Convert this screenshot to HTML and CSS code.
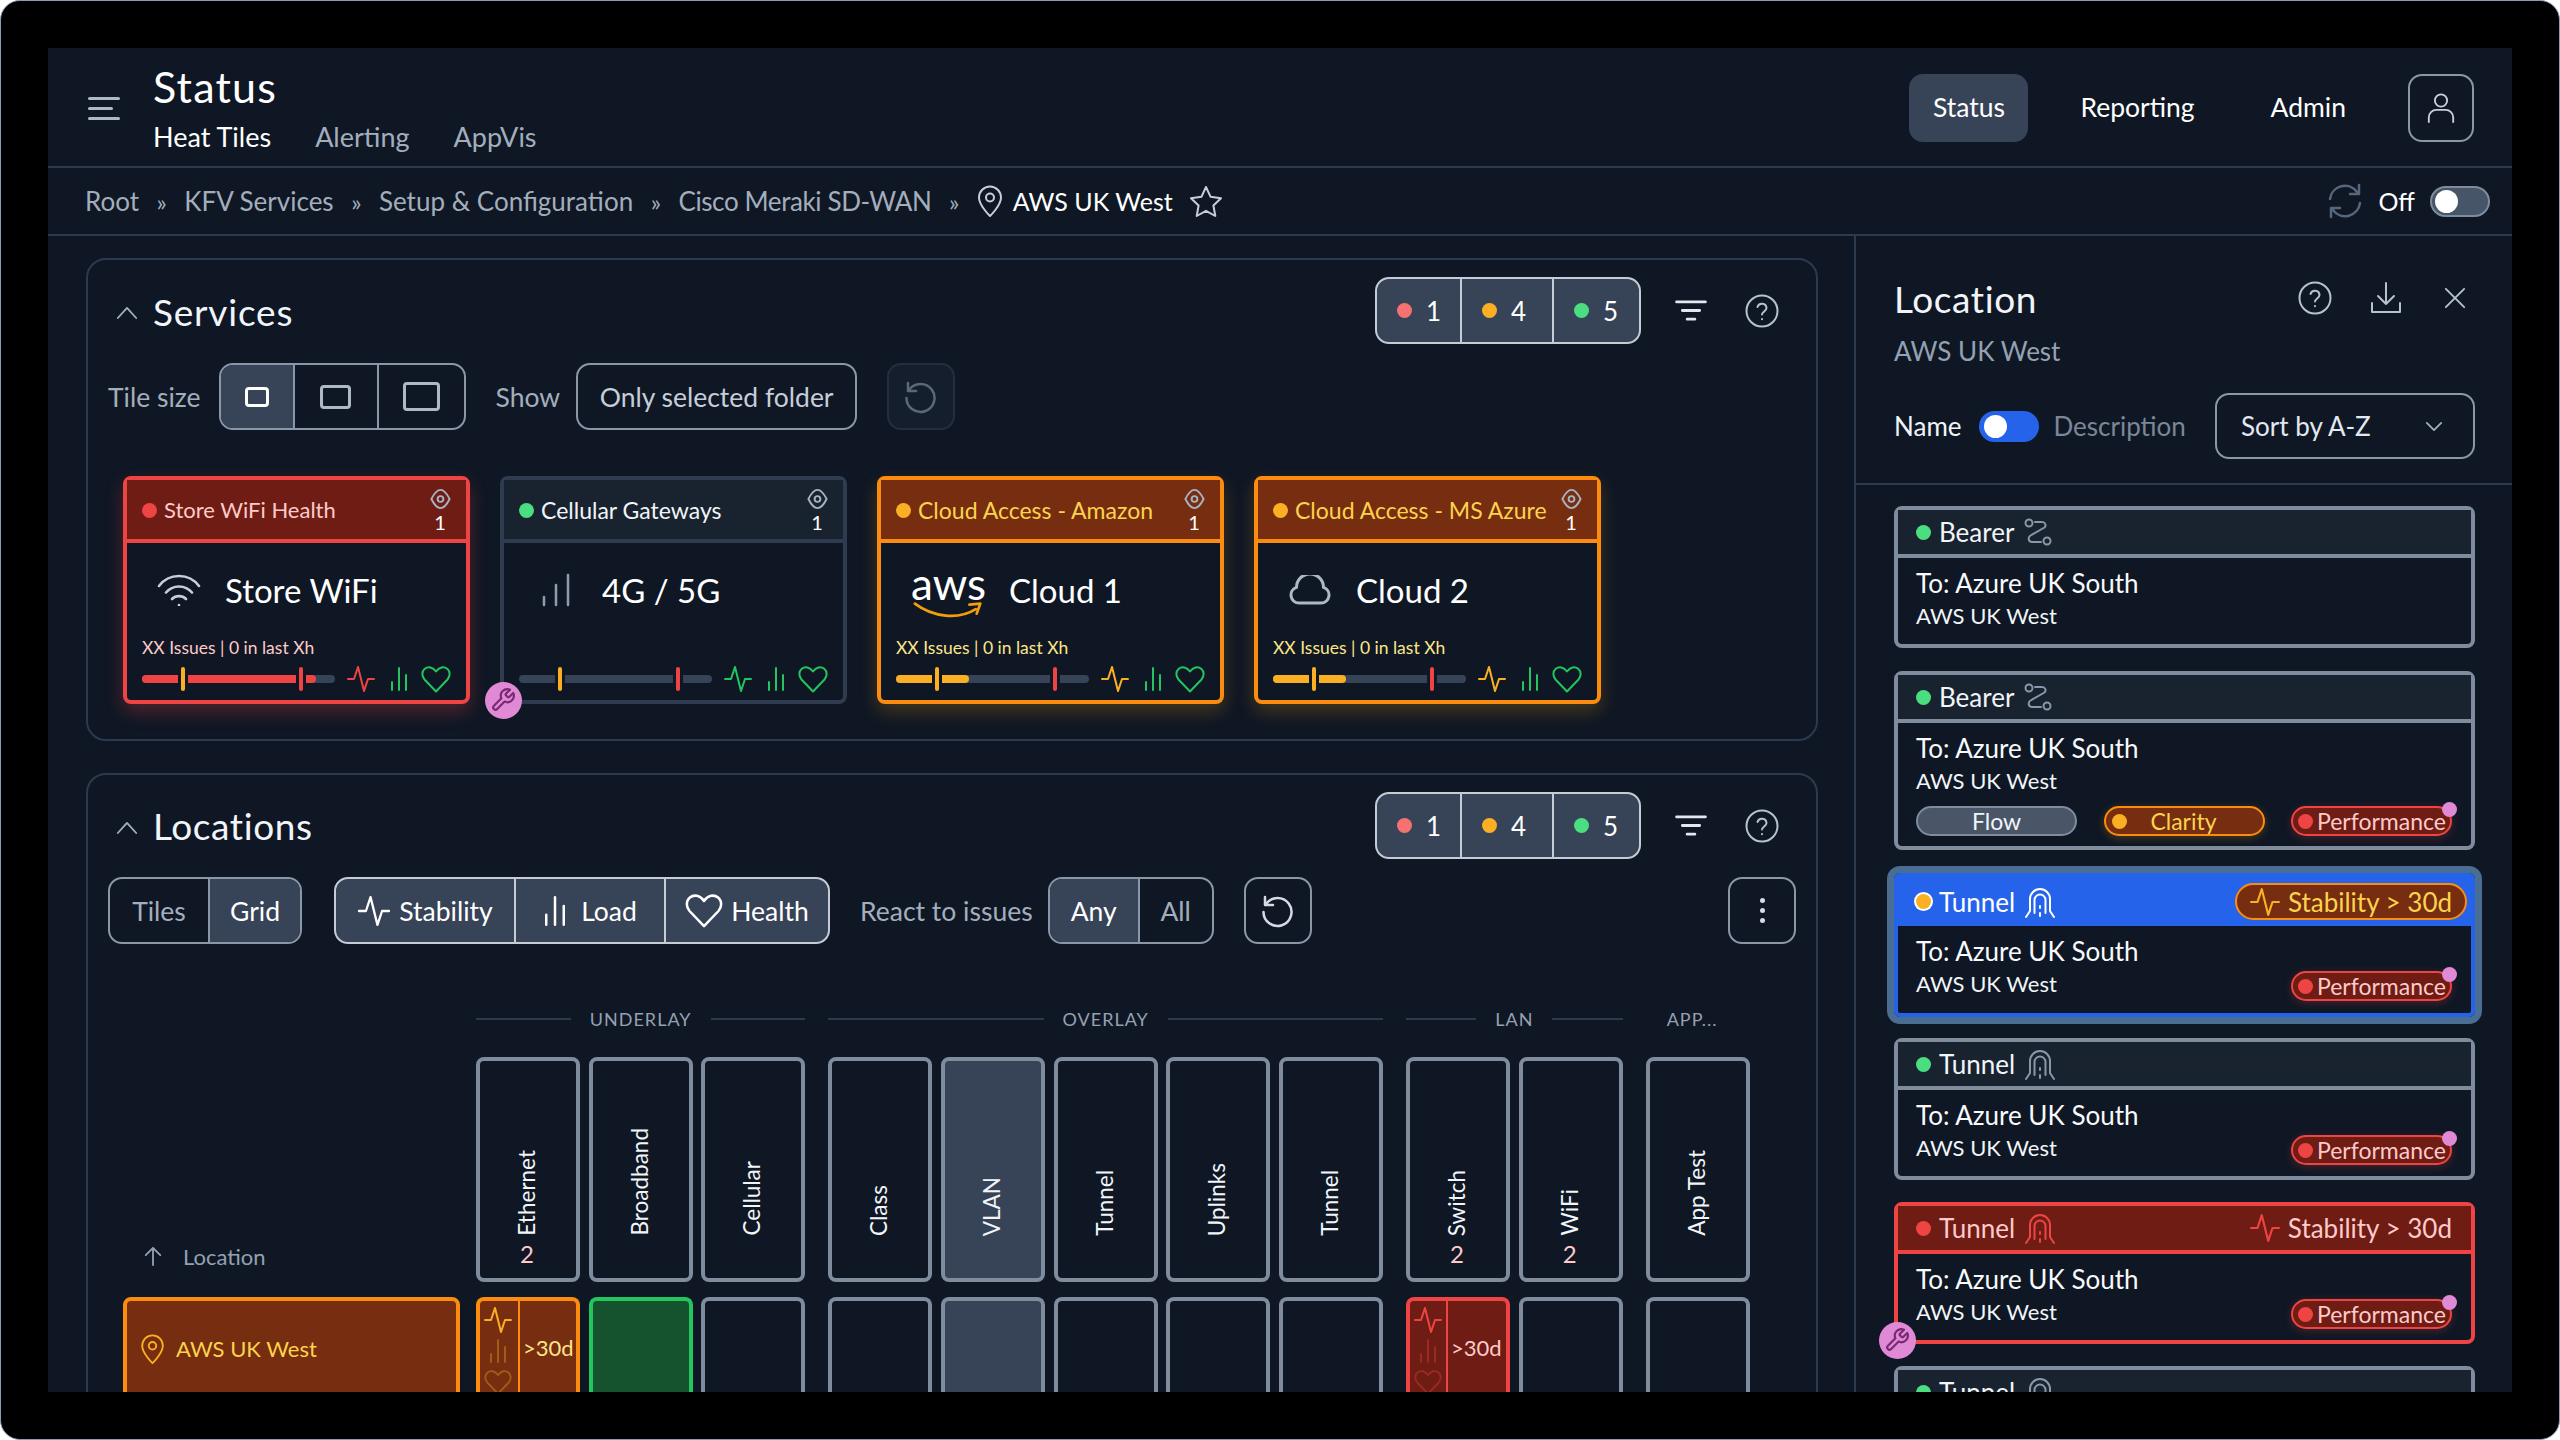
FILE: index.html
```html
<!DOCTYPE html>
<html lang="en">
<head>
<meta charset="utf-8">
<title>Status</title>
<link rel="stylesheet" href="styles.css">
</head>
<body>
<svg class="defs" aria-hidden="true">
  <symbol id="i-pulse" viewBox="0 0 28 26"><path d="M1 13h6l4-12 6 24 4-12h6"/></symbol>
  <symbol id="i-bars" viewBox="0 0 18 24"><path d="M2 15v8M9 1v22M16 8v15"/></symbol>
  <symbol id="i-heart" viewBox="0 0 30 27"><path d="M15 25.500L3.500 13.500C.5 10 .8 5.300 3.800 2.800 7 .2 11.800.9 15 5.500 18.200.9 23 .2 26.200 2.800 29.200 5.300 29.500 10 26.500 13.500z"/></symbol>
  <symbol id="i-eye" viewBox="0 0 24 24"><path d="M2.500 12C5 7 8.500 2.500 12 2.500S19 7 21.500 12C19 17 15.500 21.500 12 21.500S5 17 2.500 12z"/><circle cx="12" cy="12" r="3"/></symbol>
  <symbol id="i-help" viewBox="0 0 34 34"><circle cx="17" cy="17" r="15.500"/><path d="M12.500 13a4.600 4.600 0 0 1 9 1c0 3-4.500 3.800-4.500 6.500M17 25v.3"/></symbol>
  <symbol id="i-filter" viewBox="0 0 32 24"><path d="M1 3h30M7 12h18M12 21h8"/></symbol>
  <symbol id="i-up" viewBox="0 0 24 14"><path d="M2 13L12 2l10 11"/></symbol>
  <symbol id="i-down" viewBox="0 0 20 12"><path d="M2 2l8 8 8-8"/></symbol>
  <symbol id="i-star" viewBox="0 0 34 32"><path d="M17 2l4.600 9.800 10.400 1.400-7.600 7.300 1.900 10.500L17 25.800 7.700 31l1.900-10.500L2 13.200l10.400-1.400z"/></symbol>
  <symbol id="i-pin" viewBox="0 0 26 32"><path d="M13 31S2 20.500 2 12.500a11 11 0 0 1 22 0C24 20.500 13 31 13 31z"/><circle cx="13" cy="12.500" r="4"/></symbol>
  <symbol id="i-user" viewBox="0 0 32 34"><circle cx="16" cy="9" r="6.500"/><path d="M3 32v-5a8 8 0 0 1 8-8h10a8 8 0 0 1 8 8v5"/></symbol>
  <symbol id="i-refresh" viewBox="0 0 38 38"><path d="M4 17A15 15 0 0 1 31 10M33 3v9h-9M34 21A15 15 0 0 1 7 28M5 35v-9h9"/></symbol>
  <symbol id="i-reset" viewBox="0 0 34 34"><path d="M5 10a14 14 0 1 1-2.500 8M4 3v8h8"/></symbol>
  <symbol id="i-download" viewBox="0 0 32 32"><path d="M16 1v21M8 14l8 8 8-8M2 21v9h28v-9"/></symbol>
  <symbol id="i-close" viewBox="0 0 24 24"><path d="M2 2l20 20M22 2L2 22"/></symbol>
  <symbol id="i-wifi" viewBox="0 0 44 32"><path d="M2 12a25 25 0 0 1 40 0M9 18.500a17 17 0 0 1 26 0M15 25a10 10 0 0 1 14 0M22 31v.3"/></symbol>
  <symbol id="i-signal" viewBox="0 0 28 34"><path d="M2 24v8M14 12v20M26 2v30"/></symbol>
  <symbol id="i-cloud" viewBox="0 0 42 30"><path d="M10 28h22a8 8 0 0 0 2.500-15.600A13.500 13.500 0 0 0 7.500 12.400 8 8 0 0 0 10 28z"/></symbol>
  <symbol id="i-wrench" viewBox="0 0 24 24"><path d="M14.700 6.300a1 1 0 0 0 0 1.400l1.600 1.600a1 1 0 0 0 1.400 0l3.770-3.770a6 6 0 0 1-7.940 7.940l-6.910 6.910a2.120 2.120 0 0 1-3-3l6.910-6.910a6 6 0 0 1 7.940-7.940l-3.760 3.760z"/></symbol>
  <symbol id="i-route" viewBox="0 0 28 28"><circle cx="5" cy="5" r="3.500"/><circle cx="23" cy="23" r="3.500"/><path d="M11 4h7c3.500 0 4.500 3.500 2.500 5.500L6.500 17.500C3.500 19.500 4.500 24 8 24h9"/></symbol>
  <symbol id="i-tunnel" viewBox="0 0 30 32"><path d="M1 31l4-6V13a10 10 0 0 1 20 0v12l4 6M9.500 27V14a5.500 5.500 0 0 1 11 0v13M15 20v2M15 27v3"/></symbol>
  <symbol id="i-arrow" viewBox="0 0 20 22"><path d="M10 21V2M2 10l8-8 8 8"/></symbol>
  <symbol id="i-smile" viewBox="0 0 76 22"><path class="smile" d="M1 4c20 15 48 18 67 6"/><path class="smile" d="M61 5l12-1-4 11"/></symbol>
</svg>

<div class="screen">
  <div class="app">
    <header class="topbar">
      <div class="burger"><span></span><span class="short"></span><span></span></div>
      <div class="titles">
        <h1 class="title">Status</h1>
        <nav class="tabs"><span class="tab on">Heat Tiles</span><span class="tab">Alerting</span><span class="tab">AppVis</span></nav>
      </div>
      <nav class="mainnav">
        <span class="nav-item active">Status</span>
        <span class="nav-item">Reporting</span>
        <span class="nav-item">Admin</span>
        <span class="user-btn"><svg class="ic w32"><use href="#i-user"/></svg></span>
      </nav>
    </header>

    <div class="crumbs">
      <span class="crumb">Root</span><span class="sep">»</span>
      <span class="crumb">KFV Services</span><span class="sep">»</span>
      <span class="crumb">Setup &amp; Configuration</span><span class="sep">»</span>
      <span class="crumb tight">Cisco Meraki SD-WAN</span><span class="sep">»</span>
      <svg class="ic pin-crumb"><use href="#i-pin"/></svg>
      <span class="crumb current">AWS UK West</span>
      <svg class="ic star"><use href="#i-star"/></svg>
      <div class="auto">
        <svg class="ic refresh"><use href="#i-refresh"/></svg>
        <span class="off-label">Off</span>
        <span class="toggle"><span class="knob"></span></span>
      </div>
    </div>

    <div class="workspace">
      <main class="content">
        <section class="card services">
          <div class="card-head">
            <svg class="ic chev"><use href="#i-up"/></svg>
            <h2 class="card-title">Services</h2>
            <div class="counts">
              <span class="count"><i class="dot red"></i>1</span>
              <span class="count"><i class="dot amber"></i>4</span>
              <span class="count"><i class="dot green"></i>5</span>
            </div>
            <svg class="ic filter"><use href="#i-filter"/></svg>
            <svg class="ic help"><use href="#i-help"/></svg>
          </div>
          <div class="tools">
            <span class="label">Tile size</span>
            <div class="seg sizes">
              <span class="seg-item s1 sel"><i class="sq sq1"></i></span>
              <span class="seg-item s2"><i class="sq sq2"></i></span>
              <span class="seg-item s3"><i class="sq sq3"></i></span>
            </div>
            <span class="label show">Show</span>
            <span class="plain-btn">Only selected folder</span>
            <span class="icon-btn faint"><svg class="ic reset"><use href="#i-reset"/></svg></span>
          </div>
          <div class="tiles">
            <article class="tile t-red">
              <div class="tile-head">
                <i class="dot red"></i><span class="tile-name">Store WiFi Health</span>
                <div class="tile-watch"><svg class="ic eye"><use href="#i-eye"/></svg><span>1</span></div>
              </div>
              <div class="hero"><svg class="ic hero-ic wifi"><use href="#i-wifi"/></svg><span class="hero-text">Store WiFi</span></div>
              <div class="issues">XX Issues | 0 in last Xh</div>
              <div class="tile-foot">
                <div class="bar"><span class="fill fill-red"></span><i class="mark m-amber"></i><i class="mark m-red"></i></div>
                <svg class="ic pulse c-red"><use href="#i-pulse"/></svg>
                <svg class="ic bars c-green"><use href="#i-bars"/></svg>
                <svg class="ic heart c-green"><use href="#i-heart"/></svg>
              </div>
            </article>
            <article class="tile t-plain">
              <div class="tile-head">
                <i class="dot green"></i><span class="tile-name">Cellular Gateways</span>
                <div class="tile-watch"><svg class="ic eye"><use href="#i-eye"/></svg><span>1</span></div>
              </div>
              <div class="hero"><svg class="ic hero-ic signal"><use href="#i-signal"/></svg><span class="hero-text">4G / 5G</span></div>
              <div class="issues">&nbsp;</div>
              <div class="tile-foot">
                <div class="bar"><i class="mark m-amber"></i><i class="mark m-red"></i></div>
                <svg class="ic pulse c-green"><use href="#i-pulse"/></svg>
                <svg class="ic bars c-green"><use href="#i-bars"/></svg>
                <svg class="ic heart c-green"><use href="#i-heart"/></svg>
              </div>
              <span class="wrench"><svg class="ic"><use href="#i-wrench"/></svg></span>
            </article>
            <article class="tile t-amber">
              <div class="tile-head">
                <i class="dot amber"></i><span class="tile-name">Cloud Access - Amazon</span>
                <div class="tile-watch"><svg class="ic eye"><use href="#i-eye"/></svg><span>1</span></div>
              </div>
              <div class="hero">
                <span class="aws"><span class="aws-word">aws</span><svg class="ic aws-smile"><use href="#i-smile"/></svg></span>
                <span class="hero-text">Cloud 1</span>
              </div>
              <div class="issues">XX Issues | 0 in last Xh</div>
              <div class="tile-foot">
                <div class="bar"><span class="fill fill-amber"></span><i class="mark m-amber"></i><i class="mark m-red"></i></div>
                <svg class="ic pulse c-amber"><use href="#i-pulse"/></svg>
                <svg class="ic bars c-green"><use href="#i-bars"/></svg>
                <svg class="ic heart c-green"><use href="#i-heart"/></svg>
              </div>
            </article>
            <article class="tile t-amber">
              <div class="tile-head">
                <i class="dot amber"></i><span class="tile-name">Cloud Access - MS Azure</span>
                <div class="tile-watch"><svg class="ic eye"><use href="#i-eye"/></svg><span>1</span></div>
              </div>
              <div class="hero"><svg class="ic hero-ic cloud"><use href="#i-cloud"/></svg><span class="hero-text">Cloud 2</span></div>
              <div class="issues">XX Issues | 0 in last Xh</div>
              <div class="tile-foot">
                <div class="bar"><span class="fill fill-amber"></span><i class="mark m-amber"></i><i class="mark m-red"></i></div>
                <svg class="ic pulse c-amber"><use href="#i-pulse"/></svg>
                <svg class="ic bars c-green"><use href="#i-bars"/></svg>
                <svg class="ic heart c-green"><use href="#i-heart"/></svg>
              </div>
            </article>
          </div>
        </section>

        <section class="card locations">
          <div class="card-head">
            <svg class="ic chev"><use href="#i-up"/></svg>
            <h2 class="card-title">Locations</h2>
            <div class="counts">
              <span class="count"><i class="dot red"></i>1</span>
              <span class="count"><i class="dot amber"></i>4</span>
              <span class="count"><i class="dot green"></i>5</span>
            </div>
            <svg class="ic filter"><use href="#i-filter"/></svg>
            <svg class="ic help"><use href="#i-help"/></svg>
          </div>
          <div class="tools">
            <div class="seg mode">
              <span class="seg-item text t-tiles">Tiles</span>
              <span class="seg-item text t-grid sel">Grid</span>
            </div>
            <div class="seg metric">
              <span class="seg-item text m1"><svg class="ic m-ic-p"><use href="#i-pulse"/></svg>Stability</span>
              <span class="seg-item text m2"><svg class="ic m-ic-b"><use href="#i-bars"/></svg>Load</span>
              <span class="seg-item text m3"><svg class="ic m-ic-h"><use href="#i-heart"/></svg>Health</span>
            </div>
            <span class="label react">React to issues</span>
            <div class="seg anyall">
              <span class="seg-item text a1 sel">Any</span>
              <span class="seg-item text a2">All</span>
            </div>
            <span class="icon-btn"><svg class="ic reset"><use href="#i-reset"/></svg></span>
            <span class="icon-btn kebab"><i></i><i></i><i></i></span>
          </div>
          <div class="matrix">
            <div class="mrow">
              <div class="sort"><svg class="ic arrow"><use href="#i-arrow"/></svg>Location</div>
              <div class="mgroup g3">
                <div class="gtitle"><span>UNDERLAY</span></div>
                <div class="cols">
                  <div class="col"><span class="col-name">Ethernet</span><span class="col-count">2</span></div>
                  <div class="col"><span class="col-name">Broadband</span><span class="col-count"></span></div>
                  <div class="col"><span class="col-name">Cellular</span><span class="col-count"></span></div>
                </div>
              </div>
              <div class="mgroup g5">
                <div class="gtitle"><span>OVERLAY</span></div>
                <div class="cols">
                  <div class="col"><span class="col-name">Class</span><span class="col-count"></span></div>
                  <div class="col sel"><span class="col-name">VLAN</span><span class="col-count"></span></div>
                  <div class="col"><span class="col-name">Tunnel</span><span class="col-count"></span></div>
                  <div class="col"><span class="col-name">Uplinks</span><span class="col-count"></span></div>
                  <div class="col"><span class="col-name">Tunnel</span><span class="col-count"></span></div>
                </div>
              </div>
              <div class="mgroup g2">
                <div class="gtitle"><span>LAN</span></div>
                <div class="cols">
                  <div class="col"><span class="col-name">Switch</span><span class="col-count">2</span></div>
                  <div class="col"><span class="col-name">WiFi</span><span class="col-count">2</span></div>
                </div>
              </div>
              <div class="mgroup g1">
                <div class="gtitle bare"><span>APP...</span></div>
                <div class="cols">
                  <div class="col"><span class="col-name">App Test</span><span class="col-count"></span></div>
                </div>
              </div>
            </div>
            <div class="mrow data">
              <div class="loc-cell"><svg class="ic loc-pin"><use href="#i-pin"/></svg>AWS UK West</div>
              <div class="mgroup g3 cols">
                <div class="cell c-warn"><div class="cell-ics"><svg class="ic cp"><use href="#i-pulse"/></svg><svg class="ic cb"><use href="#i-bars"/></svg><svg class="ic ch"><use href="#i-heart"/></svg></div><span class="cell-txt">&gt;30d</span></div>
                <div class="cell c-ok"></div>
                <div class="cell"></div>
              </div>
              <div class="mgroup g5 cols">
                <div class="cell"></div>
                <div class="cell sel"></div>
                <div class="cell"></div>
                <div class="cell"></div>
                <div class="cell"></div>
              </div>
              <div class="mgroup g2 cols">
                <div class="cell c-bad"><div class="cell-ics"><svg class="ic cp"><use href="#i-pulse"/></svg><svg class="ic cb"><use href="#i-bars"/></svg><svg class="ic ch"><use href="#i-heart"/></svg></div><span class="cell-txt">&gt;30d</span></div>
                <div class="cell"></div>
              </div>
              <div class="mgroup g1 cols"><div class="cell"></div></div>
            </div>
          </div>
        </section>
      </main>

      <aside class="panel">
        <div class="panel-top">
          <div class="panel-head">
            <h2 class="panel-title">Location</h2>
            <svg class="ic p-help"><use href="#i-help"/></svg>
            <svg class="ic p-dl"><use href="#i-download"/></svg>
            <svg class="ic p-close"><use href="#i-close"/></svg>
          </div>
          <div class="panel-sub">AWS UK West</div>
          <div class="panel-ctrl">
            <span class="pc-name">Name</span>
            <span class="toggle on"><span class="knob"></span></span>
            <span class="pc-desc">Description</span>
            <span class="select">Sort by A-Z<svg class="ic sel-chev"><use href="#i-down"/></svg></span>
          </div>
        </div>
        <div class="list">
          <article class="item">
            <div class="item-head"><i class="dot green"></i><span class="item-name">Bearer</span><svg class="ic route"><use href="#i-route"/></svg></div>
            <div class="item-body"><div class="item-text"><div class="to">To: Azure UK South</div><div class="from">AWS UK West</div></div></div>
          </article>
          <article class="item nudge-down">
            <div class="item-head"><i class="dot green"></i><span class="item-name">Bearer</span><svg class="ic route"><use href="#i-route"/></svg></div>
            <div class="item-body stack">
              <div class="item-text"><div class="to">To: Azure UK South</div><div class="from">AWS UK West</div></div>
              <div class="pills">
                <span class="pill p-flow">Flow</span>
                <span class="pill p-clarity"><i class="dot amber"></i><span class="pill-t">Clarity</span></span>
                <span class="pill p-perf"><i class="dot red"></i>Performance<b class="pink"></b></span>
              </div>
            </div>
          </article>
          <article class="item it-selected">
            <div class="item-head"><i class="dot amber ring"></i><span class="item-name">Tunnel</span><svg class="ic tunnel"><use href="#i-tunnel"/></svg>
              <span class="stab-pill"><svg class="ic st-ic"><use href="#i-pulse"/></svg>Stability &gt; 30d</span></div>
            <div class="item-body"><div class="item-text"><div class="to">To: Azure UK South</div><div class="from">AWS UK West</div></div>
              <span class="pill p-perf solo"><i class="dot red"></i>Performance<b class="pink"></b></span></div>
          </article>
          <article class="item nudge-up">
            <div class="item-head"><i class="dot green"></i><span class="item-name">Tunnel</span><svg class="ic tunnel"><use href="#i-tunnel"/></svg></div>
            <div class="item-body"><div class="item-text"><div class="to">To: Azure UK South</div><div class="from">AWS UK West</div></div>
              <span class="pill p-perf solo"><i class="dot red"></i>Performance<b class="pink"></b></span></div>
          </article>
          <article class="item it-red">
            <div class="item-head"><i class="dot red"></i><span class="item-name">Tunnel</span><svg class="ic tunnel"><use href="#i-tunnel"/></svg>
              <span class="stab-plain"><svg class="ic st-ic"><use href="#i-pulse"/></svg>Stability &gt; 30d</span></div>
            <div class="item-body"><div class="item-text"><div class="to">To: Azure UK South</div><div class="from">AWS UK West</div></div>
              <span class="pill p-perf solo"><i class="dot red"></i>Performance<b class="pink"></b></span></div>
            <span class="wrench"><svg class="ic"><use href="#i-wrench"/></svg></span>
          </article>
          <article class="item">
            <div class="item-head"><i class="dot green"></i><span class="item-name">Tunnel</span><svg class="ic tunnel"><use href="#i-tunnel"/></svg></div>
          </article>
        </div>
      </aside>
    </div>
  </div>
</div>
</body>
</html>
```
FILE: styles.css
```css
* { box-sizing: border-box; }
html, body { margin: 0; padding: 0; background: #fff; }
body { font-family: "Lato", "Open Sans", sans-serif; color: #f1f5f9; }
h1, h2 { margin: 0; font-weight: 400; }
i { display: block; font-style: normal; }
.defs { position: absolute; width: 0; height: 0; }
.ic { display: block; flex: none; fill: none; stroke: currentColor; stroke-width: 2; stroke-linecap: round; stroke-linejoin: round; overflow: visible; }

.screen { width: 2560px; height: 1440px; background: #000; border: 1px solid #8d9bb0; border-radius: 20px; padding: 47px; overflow: hidden; }
.app { width: 2464px; height: 1344px; background: #0f1724; display: flex; flex-direction: column; overflow: hidden; }

/* top bar */
.topbar { height: 120px; flex: none; display: flex; align-items: flex-start; border-bottom: 2px solid #2c3a4e; padding: 0 38px 0 40px; }
.burger { width: 32px; margin-top: 49px; display: flex; flex-direction: column; gap: 7px; }
.burger span { display: block; height: 3px; width: 32px; background: #aeb8c6; border-radius: 2px; }
.burger span.short { width: 25px; }
.titles { margin-left: 33px; }
.title { font-size: 43px; letter-spacing: 1.2px; line-height: 48px; margin-top: 15px; color: #fff; }
.tabs { display: flex; gap: 44px; margin-top: 10px; }
.tab { font-size: 27px; line-height: 32px; color: #a3aebd; }
.tab.on { color: #fff; }
.mainnav { margin-left: auto; margin-top: 26px; display: flex; align-items: center; }
.nav-item { font-size: 26.500px; height: 68px; line-height: 66px; color: #fff; border-radius: 14px; }
.nav-item.active { background: #374357; width: 119px; text-align: center; margin-right: 52px; }
.nav-item:nth-child(2) { margin-right: 76px; }
.nav-item:nth-child(3) { margin-right: 62px; }
.user-btn { width: 66px; height: 68px; border: 2px solid #8a97a8; border-radius: 14px; display: flex; align-items: center; justify-content: center; color: #c6ced9; }
.w32 { width: 30px; height: 32px; }

/* breadcrumb */
.crumbs { height: 68px; flex: none; display: flex; align-items: center; padding: 0 22px 0 37px; border-bottom: 2px solid #2c3a4e; font-size: 26px; }
.crumb { color: #a3aebd; }
.crumb.tight { letter-spacing: -.4px; }
.crumb.current { color: #fff; margin-left: 10px; font-size: 25px; }
.sep { color: #a3aebd; margin: 0 17.500px; font-size: 24px; }
.pin-crumb { width: 26px; height: 32px; color: #c6ced9; }
.star { width: 34px; height: 32px; margin-left: 16px; color: #c6ced9; }
.auto { margin-left: auto; display: flex; align-items: center; }
.refresh { width: 38px; height: 38px; color: #56677d; stroke-width: 2.500; }
.off-label { margin-left: 14px; color: #fff; font-size: 25px; }
.toggle { width: 60px; height: 31px; margin-left: 15px; border-radius: 16px; background: #475569; border: 2px solid #7e8c9e; display: flex; align-items: center; padding: 0 3px; }
.knob { width: 23px; height: 23px; border-radius: 50%; background: #fff; }
.toggle.on { background: #2563eb; border-color: #2563eb; margin-left: 17px; }

/* workspace */
.workspace { flex: 1; min-height: 0; display: flex; }
.content { width: 1808px; flex: none; border-right: 2px solid #2c3a4e; padding: 22px 36px 0 38px; display: flex; flex-direction: column; gap: 32px; overflow: hidden; }
.card { border: 2px solid #2c3a4e; border-radius: 20px; padding: 17px 20px 0; flex: none; }
.services { height: 483px; }
.locations { height: 900px; }
.card-head { display: flex; align-items: center; height: 67px; padding: 0 17px 0 8px; }
.chev { width: 22px; height: 13px; color: #a3aebd; margin-top: 4px; }
.card-title { font-size: 37px; letter-spacing: .6px; margin-left: 15px; color: #f1f5f9; }
.services .card-title { margin-top: 2px; letter-spacing: .8px; }
.counts { margin-left: auto; display: flex; height: 67px; background: #374357; border: 2px solid #c5ccd6; border-radius: 14px; }
.count { display: flex; align-items: center; gap: 14px; font-size: 26px; color: #fff; padding-left: 20px; }
.count:nth-child(1) { width: 83px; }
.count:nth-child(2) { width: 92px; border-left: 2px solid #c5ccd6; }
.count:nth-child(3) { width: 87px; border-left: 2px solid #c5ccd6; }
.dot { width: 15px; height: 15px; border-radius: 50%; flex: none; }
.dot.red { background: #f87171; }
.dot.amber { background: #fbb024; }
.dot.green { background: #4ade80; }
.filter { width: 32px; height: 23px; margin-left: 34px; color: #e2e8f0; stroke-width: 3; }
.help { width: 34px; height: 34px; margin-left: 38px; color: #b8c1ce; }

.tools { display: flex; align-items: center; height: 67px; margin-top: 19px; }
.locations .tools { margin-top: 18px; }
.label { font-size: 26.500px; color: #a3aebd; }
.seg { display: flex; height: 67px; border: 2px solid #8a97a8; border-radius: 14px; overflow: hidden; }
.seg-item { display: flex; align-items: center; justify-content: center; border-left: 2px solid #8a97a8; }
.seg-item:first-child { border-left: 0; }
.seg-item.text { font-size: 26.500px; color: #a3aebd; }
.seg-item.sel { background: #374357; color: #fff; }
.sizes { margin-left: 18px; width: 247px; }
.s1 { width: 72px; } .s2 { width: 84px; } .s3 { flex: 1; }
.sq { border-radius: 4px; border: 3px solid #aeb8c6; }
.sq1 { width: 24px; height: 20px; border-color: #fff; }
.sq2 { width: 31px; height: 24px; }
.sq3 { width: 37px; height: 29px; }
.show { margin-left: 30px; }
.plain-btn { margin-left: 16px; height: 67px; width: 281px; border: 2px solid #8a97a8; border-radius: 14px; font-size: 26.500px; color: #c6ced9; display: flex; align-items: center; justify-content: center; }
.icon-btn { margin-left: 30px; width: 68px; height: 67px; border: 2px solid #8a97a8; border-radius: 14px; display: flex; align-items: center; justify-content: center; color: #d5dbe4; }
.icon-btn.faint { border-color: #232e3e; background: #151e2c; color: #5b6878; }
.reset { width: 34px; height: 34px; stroke-width: 2.500; }

/* tiles */
.tiles { display: flex; gap: 30px; margin: 46px 0 0 15px; }
.tile { position: relative; width: 347px; height: 228px; border: 4px solid; border-radius: 8px; background: #0f1724; }
.t-red { border-color: #ef4444; box-shadow: 0 8px 18px rgba(239,68,68,.28); }
.t-amber { border-color: #fb8c0f; box-shadow: 0 8px 18px rgba(245,158,11,.22); }
.t-plain { border-color: #2f3c50; }
.tile-head { height: 63px; border-bottom: 4px solid; display: flex; align-items: center; padding-left: 15px; position: relative; }
.t-red .tile-head { background: #6f1c14; border-color: #ef4444; color: #fecaca; }
.t-amber .tile-head { background: #762d10; border-color: #fb8c0f; color: #fcd34d; }
.t-plain .tile-head { background: #18232f; border-color: #2f3c50; color: #f1f5f9; }
.t-red .dot.red { background: #ef4444; }
.tile-head .dot { margin-top: 1px; }
.tile-name { font-size: 23px; margin-left: 7px; }
.t-red .tile-name { font-size: 22px; }
.tile-watch { margin-left: auto; width: 24px; margin-right: 14px; display: flex; flex-direction: column; align-items: center; color: #fff; font-size: 20px; line-height: 20px; gap: 1px; }
.eye { width: 23px; height: 24px; color: #a8b3c2; }
.hero { display: flex; align-items: center; height: 60px; margin-top: 17px; padding-left: 30px; }
.hero-ic { width: 44px; }
.wifi { height: 32px; color: #c6ced9; stroke-width: 2.600; }
.signal { height: 34px; padding: 0 8px; color: #8f9cae; stroke-width: 2.500; }
.cloud { height: 30px; color: #aeb8c6; stroke-width: 3; }
.hero-text { font-size: 33px; color: #fff; margin-left: 24px; }
.aws { width: 75px; display: block; height: 48px; position: relative; }
.aws-word { display: block; font-size: 44px; line-height: 34px; text-align: center; color: #fff; }
.aws-smile { width: 75px; height: 20px; color: #f59e0b; stroke-width: 3; }
.smile { fill: none; }
.aws + .hero-text { margin-left: 23px; }
.issues { font-size: 17.500px; line-height: 22px; height: 22px; margin-top: 17px; padding-left: 15px; }
.t-red .issues { color: #fecaca; }
.t-amber .issues { color: #fde68a; }
.tile-foot { display: flex; align-items: center; height: 26px; margin-top: 7px; padding-left: 15px; }
.bar { position: relative; width: 193px; height: 8px; border-radius: 4px; background: #374357; margin-right: 12px; }
.fill { display: block; height: 8px; border-radius: 4px; }
.fill-red { width: 174px; background: #ef4444; }
.fill-amber { width: 73px; background: #fbb024; }
.mark { position: absolute; top: -8px; width: 4px; height: 24px; border-radius: 2px; box-shadow: 0 0 0 3px #0f1724; }
.m-amber { left: 39px; background: #fbb024; }
.m-red { left: 157px; background: #ef4444; }
.pulse { width: 28px; height: 26px; }
.bars { width: 18px; height: 24px; margin-left: 15px; }
.heart { width: 30px; height: 27px; margin-left: 13px; }
.c-red { color: #ef4444; } .c-green { color: #22c55e; } .c-amber { color: #fbb024; }
.wrench { position: absolute; left: -19.500px; bottom: -18.500px; width: 37px; height: 37px; border-radius: 50%; background: #e08ad6; color: #7a2a72; display: flex; align-items: center; justify-content: center; z-index: 2; }
.wrench .ic { width: 26px; height: 26px; }

/* locations */
.mode { width: 194px; }
.t-tiles { width: 98px; }
.t-grid { flex: 1; }
.metric { margin-left: 32px; width: 496px; background: #374357; border-color: #c5ccd6; }
.metric .seg-item { color: #fff; gap: 8px; border-color: #c5ccd6; }
.m1 { width: 178px; } .m2 { width: 150px; } .m3 { flex: 1; }
.m-ic-p { width: 34px; height: 30px; }
.m-ic-b { width: 24px; height: 30px; margin-right: 6px; }
.m-ic-h { width: 38px; height: 34px; }
.react { margin-left: 30px; }
.anyall { margin-left: 15px; width: 166px; }
.a1 { width: 88px; } .a2 { flex: 1; }
.kebab { margin-left: auto; flex-direction: column; gap: 5px; }
.kebab i { width: 5px; height: 5px; border-radius: 50%; background: #d5dbe4; }

.matrix { margin: 65px 0 0 15px; }
.mrow { display: flex; align-items: stretch; }
.sort { width: 337px; margin-right: 16px; align-self: flex-end; display: flex; align-items: center; gap: 20px; font-size: 22px; color: #94a1b2; height: 26px; margin-bottom: 13px; padding-left: 20px; }
.arrow { width: 20px; height: 20px; }
.mgroup { margin-right: 23px; display: flex; flex-direction: column; gap: 28px; }
.g3 { width: 329.330px; } .g5 { width: 554.670px; } .g2 { width: 216.670px; } .g1 { width: 104px; }
.gtitle { height: 20px; display: flex; align-items: center; gap: 19px; font-size: 18px; letter-spacing: 1px; color: #94a1b2; }
.gtitle::before, .gtitle::after { content: ""; flex: 1; height: 2px; background: #2c3a4e; }
.gtitle.bare { padding-left: 21px; }
.gtitle.bare::before, .gtitle.bare::after { display: none; }
.cols { display: flex; flex-direction: row; gap: 8.670px; }
.col { width: 104px; height: 225px; border: 4px solid #7e8c9e; border-radius: 8px; display: flex; flex-direction: column; align-items: center; justify-content: flex-end; padding-bottom: 6px; }
.col.sel { background: #374357; }
.col-name { writing-mode: vertical-rl; transform: rotate(180deg); font-size: 22.500px; color: #f1f5f9; line-height: 24px; margin-right: 2px; }
.col-count { height: 36px; font-size: 24px; line-height: 36px; color: #fecaca; margin-right: 2px; }
.data { margin-top: 15px; }
.loc-cell { width: 337px; margin-right: 16px; height: 200px; border: 4px solid #fb8c0f; border-radius: 8px 8px 0 0; background: #762d10; color: #fcd34d; font-size: 22px; display: flex; align-items: flex-start; gap: 11px; padding: 33px 0 0 13px; line-height: 30px; }
.loc-pin { width: 25px; height: 30px; color: #fbb024; }
.cell { width: 104px; height: 200px; border: 4px solid #7e8c9e; border-bottom: 0; border-radius: 8px 8px 0 0; display: flex; }
.cell.sel { background: #374357; }
.c-ok { background: #14532d; border-color: #22c55e; }
.c-warn { background: #762d10; border-color: #fb8c0f; color: #fde68a; }
.c-bad { background: #6f1c14; border-color: #ef4444; color: #fecaca; }
.cell-ics { width: 40px; border-right: 2px solid; padding: 6px 0 0 4px; display: flex; flex-direction: column; gap: 6px; }
.c-warn .cell-ics { border-color: #fb8c0f; color: #fbb024; }
.c-bad .cell-ics { border-color: #ef4444; color: #ef4444; width: 38px; }
.cp { width: 28px; height: 26px; }
.cb { width: 20px; height: 24px; margin-left: 4px; opacity: .35; }
.ch { width: 28px; height: 27px; opacity: .35; }
.cell-txt { font-size: 22px; line-height: 30px; padding: 32px 0 0 3px; }

/* panel */
.panel { flex: 1; min-width: 0; display: flex; flex-direction: column; }
.panel-top { height: 249px; flex: none; padding: 0 37px 0 38px; border-bottom: 2px solid #2c3a4e; }
.panel-head { display: flex; align-items: center; height: 50px; margin-top: 37px; }
.panel-title { font-size: 37px; letter-spacing: .6px; color: #f1f5f9; }
.p-help { width: 34px; height: 34px; margin-left: auto; color: #b8c1ce; }
.p-dl { width: 32px; height: 32px; margin-left: 38px; color: #b8c1ce; }
.p-close { width: 24px; height: 22px; margin-left: 41px; margin-right: 8px; color: #b8c1ce; }
.panel-sub { font-size: 26px; line-height: 32px; margin-top: 12px; color: #94a1b2; }
.panel-ctrl { display: flex; align-items: center; height: 66px; margin-top: 26px; font-size: 26px; }
.pc-name { color: #f1f5f9; }
.pc-desc { margin-left: 15px; color: #7b8798; }
.select { margin-left: auto; width: 260px; height: 66px; border: 2px solid #8a97a8; border-radius: 14px; display: flex; align-items: center; padding: 0 30px 0 24px; color: #e2e8f0; justify-content: space-between; }
.sel-chev { width: 18px; height: 11px; color: #a3aebd; }

.list { flex: 1; min-height: 0; overflow: hidden; padding: 21px 37px 0 38px; display: flex; flex-direction: column; gap: 22px; }
.item { position: relative; flex: none; border: 4px solid #7e8c9e; border-radius: 8px; background: #0f1724; }
.nudge-down { margin-top: 1px; }
.nudge-up { margin-top: -1px; }
.item-head { height: 48px; display: flex; align-items: center; padding: 0 10px 0 18px; background: #18232f; border-bottom: 4px solid #7e8c9e; }
.item-name { font-size: 26px; margin-left: 8px; color: #f1f5f9; }
.route { width: 28px; height: 28px; margin-left: 10px; color: #8a97a8; }
.tunnel { width: 30px; height: 32px; margin-left: 10px; color: #8a97a8; }
.item-body { display: flex; padding: 12px 15px 11px 18px; justify-content: space-between; min-height: 86px; }
.item-body.stack { flex-direction: column; justify-content: flex-start; padding-bottom: 10px; }
.to { font-size: 26px; line-height: 26px; color: #f8fafc; }
.from { font-size: 22px; line-height: 26px; margin-top: 7px; color: #f1f5f9; }
.pills { display: flex; justify-content: space-between; margin-top: 12px; padding-right: 4px; }
.pill { position: relative; width: 161px; height: 30px; border: 2px solid; border-radius: 15px; font-size: 23px; display: flex; align-items: center; justify-content: center; flex: none; }
.p-flow { background: #4a5568; border-color: #7e8c9e; color: #f1f5f9; }
.p-clarity { background: #762d10; border-color: #fb8c0f; color: #fcd34d; justify-content: flex-start; padding-left: 6px; box-shadow: 0 2px 8px rgba(245,158,11,.25); }
.pill-t { flex: 1; text-align: center; padding-right: 22px; }
.p-perf { background: #6f1c14; border-color: #ef4444; color: #fecaca; justify-content: flex-start; padding-left: 5px; white-space: nowrap; box-shadow: 0 2px 8px rgba(239,68,68,.25); }
.p-perf .dot { background: #ef4444; margin-right: 4px; }
.pink { position: absolute; right: -6.500px; top: -6.500px; width: 15px; height: 15px; border-radius: 50%; background: #e08ad6; }
.solo { margin: 33px 4px 0 0; }

.it-selected { border-color: #2563eb; outline: 7px solid #4a6d94; border-radius: 6px; margin-top: 1px; }
.it-selected .item-head { background: #2563eb; border-bottom: 0; height: 49px; padding-right: 4px; }
.it-selected .item-name { color: #fff; }
.it-selected .tunnel { color: #fff; }
.it-selected .item-head .dot { box-shadow: 0 0 0 2px #fff; }
.it-selected .item-body { min-height: 87px; }
.stab-pill { margin-left: auto; width: 232px; height: 37px; border: 2px solid #fb8c0f; border-radius: 19px; background: #762d10; color: #fcd34d; font-size: 26px; display: flex; align-items: center; justify-content: center; gap: 8px; }
.st-ic { width: 30px; height: 28px; }
.stab-pill .st-ic { color: #fbb024; }
.it-red { border-color: #ef4444; }
.it-red .item-head { background: #6f1c14; border-color: #ef4444; }
.it-red .item-name { color: #fecaca; }
.it-red .dot.red { background: #ef4444; }
.it-red .tunnel { color: #ef4444; }
.stab-plain { margin-left: auto; color: #fecaca; font-size: 26px; display: flex; align-items: center; gap: 8px; padding-right: 9px; }
.stab-plain .st-ic { color: #ef4444; }
```
